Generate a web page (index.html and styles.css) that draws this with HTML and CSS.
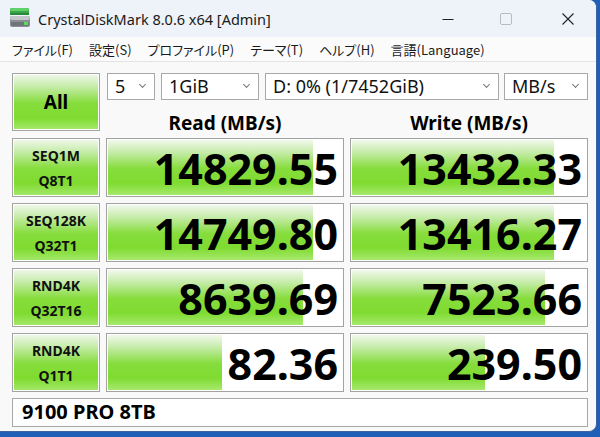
FILE: index.html
```html
<html lang="ja">
<head>
    <meta charset="UTF-8">
    <title>CrystalDiskMark</title>
    <link rel="stylesheet" href="styles.css">
</head>
<body>
    <div class="ventana">
        <!-- Barra de titulo -->
        <div class="titulo">
            <svg class="logo" width="22" height="22" viewBox="0 0 22 22">
                <rect x="1" y="1" width="19" height="7" rx="1.5" fill="#3aa64a"/>
                <rect x="1" y="1" width="19" height="3" rx="1.5" fill="#5fd06a"/>
                <rect x="1" y="6" width="19" height="2" fill="#2b8a3a"/>
                <rect x="1" y="9" width="20" height="11" rx="2" fill="#8a8f94"/>
                <rect x="1" y="9" width="20" height="4" rx="2" fill="#c2c6ca"/>
                <rect x="2" y="15" width="18" height="4" rx="1" fill="#6f7479"/>
                <rect x="15" y="15" width="4" height="3" fill="#55e05a"/>
            </svg>
            <span class="nombre">CrystalDiskMark 8.0.6 x64 [Admin]</span>
            <div class="controles">
                <span class="ctl"><svg width="12" height="12" viewBox="0 0 12 12"><path d="M0.5 6.5H11.5" stroke="#222" stroke-width="1"/></svg></span>
                <span class="ctl"><svg width="12" height="12" viewBox="0 0 12 12"><rect x="0.5" y="0.5" width="11" height="11" rx="1.5" fill="none" stroke="#bbb" stroke-width="1"/></svg></span>
                <span class="ctl cerrar"><svg width="12" height="12" viewBox="0 0 12 12"><path d="M0.5 0.5L11.5 11.5M11.5 0.5L0.5 11.5" stroke="#222" stroke-width="1.1"/></svg></span>
            </div>
        </div>
        <!-- Menu -->
        <div class="menu">
            <span>ファイル(F)</span>
            <span>設定(S)</span>
            <span>プロファイル(P)</span>
            <span>テーマ(T)</span>
            <span>ヘルプ(H)</span>
            <span>言語(Language)</span>
        </div>
        <!-- Tablero -->
        <div class="tablero">
            <div class="boton-all">All</div>
            <div class="ajustes">
                <div class="combos">
                    <div class="combo c-num">5</div>
                    <div class="combo c-size">1GiB</div>
                    <div class="combo c-drive">D: 0% (1/7452GiB)</div>
                    <div class="combo c-unit">MB/s</div>
                </div>
                <div class="cabeceras">
                    <div>Read (MB/s)</div>
                    <div>Write (MB/s)</div>
                </div>
            </div>

            <div class="etiqueta">SEQ1M<br>Q8T1</div>
            <div class="valor" style="--fill: 86.9%">14829.55</div>
            <div class="valor" style="--fill: 85.6%">13432.33</div>

            <div class="etiqueta">SEQ128K<br>Q32T1</div>
            <div class="valor" style="--fill: 86.9%">14749.80</div>
            <div class="valor" style="--fill: 85.6%">13416.27</div>

            <div class="etiqueta">RND4K<br>Q32T16</div>
            <div class="valor" style="--fill: 82.6%">8639.69</div>
            <div class="valor" style="--fill: 81.8%">7523.66</div>

            <div class="etiqueta">RND4K<br>Q1T1</div>
            <div class="valor" style="--fill: 48.3%">82.36</div>
            <div class="valor" style="--fill: 56.4%">239.50</div>

            <div class="comentario">9100 PRO 8TB</div>
        </div>
    </div>
</body>
</html>
```

FILE: styles.css
```css
body{
    margin: 0;
    background-color: #1f5fb8;
    font-family: "Noto Sans", "Noto Sans CJK JP", sans-serif;
    color: #000;
}
.ventana{
    width: 596px; height: 431px;
    background-color: #f9f9f9;
    border-right: 1px solid #3c64a0;
    border-bottom: 1px solid #3c64a0;
    border-radius: 0 8px 8px 0;
    overflow: hidden;
}
.titulo{
    height: 37px;
    display: flex;
    align-items: center;
    background-color: #eef2f9;
    padding-left: 9px;
}
.logo{
    margin-top: -1px;
}
.nombre{
    margin-left: 7px;
    font-size: 14.5px;
    color: #1a1a1a;
}
.controles{
    margin-left: auto;
    display: flex;
}
.ctl{
    width: 58px; height: 37px;
    display: flex;
    align-items: center;
    justify-content: center;
}
.cerrar{
    width: 57px;
    padding-left: 4px;
}
.menu{
    height: 24px;
    display: flex;
    align-items: center;
    gap: 16px;
    padding-left: 12px;
    background-color: #fbfbfc;
    border-bottom: 1px solid #e4e4e4;
    font-family: "Noto Sans CJK JP", sans-serif;
    font-feature-settings: "palt";
    font-size: 13px;
    color: #1a1a1a;
}
.tablero{
    display: grid;
    grid-template-columns: 88px 238px 238px;
    grid-auto-rows: 59px;
    gap: 6px;
    padding: 11px 0 0 12px;
}
.boton-all, .etiqueta{
    border: 1px solid #a3a3a3;
    box-shadow: inset 0 0 0 1px #fff;
    background: linear-gradient(to bottom, #f1f8ec 0%, #c6ecaa 22%, #86dd3c 52%, #7fdb30 78%, #a6e96d 100%);
    display: flex;
    align-items: center;
    justify-content: center;
    text-align: center;
    font-weight: bold;
}
.boton-all{
    height: 58px;
    box-sizing: border-box;
    font-size: 19px;
}
.etiqueta{
    font-size: 14px;
    line-height: 25px;
    color: #111;
}
.ajustes{
    grid-column: 2 / 4;
}
.combos{
    display: flex;
    gap: 6px;
    margin-left: 1px;
}
.combo{
    height: 27px;
    box-sizing: border-box;
    border: 1px solid #a8a8a8;
    background-color: #fff;
    font-size: 18px;
    line-height: 24px;
    padding-left: 7px;
    position: relative;
    color: #111;
}
.combo::after{
    content: "";
    position: absolute;
    right: 9px; top: 8px;
    width: 4px; height: 4px;
    border-right: 1px solid #777;
    border-bottom: 1px solid #777;
    transform: rotate(45deg);
}
.c-num{ width: 48px; }
.c-size{ width: 98px; }
.c-drive{ width: 234px; }
.c-unit{ width: 84px; margin-left: -1px; }
.cabeceras{
    display: grid;
    grid-template-columns: 238px 238px;
    gap: 6px;
    text-align: center;
    font-weight: bold;
    font-size: 19px;
    line-height: 26px;
    padding-top: 10px;
}
.valor{
    border: 1px solid #a3a3a3;
    padding: 1px 5px 0 1px;
    background:
        linear-gradient(to bottom, #f1f8ec 0%, #c6ecaa 22%, #86dd3c 52%, #7fdb30 78%, #a6e96d 100%) 1px 1px / var(--fill) calc(100% - 2px) no-repeat,
        #fff;
    text-align: right;
    font-weight: bold;
    font-size: 43px;
    line-height: 50px;
    padding-top: 5px;
}
.comentario{
    grid-column: 1 / 4;
    height: 29px;
    box-sizing: border-box;
    border: 1px solid #a8a8a8;
    background-color: #fff;
    font-weight: bold;
    font-size: 20px;
    line-height: 26px;
    padding-left: 9px;
}
```
